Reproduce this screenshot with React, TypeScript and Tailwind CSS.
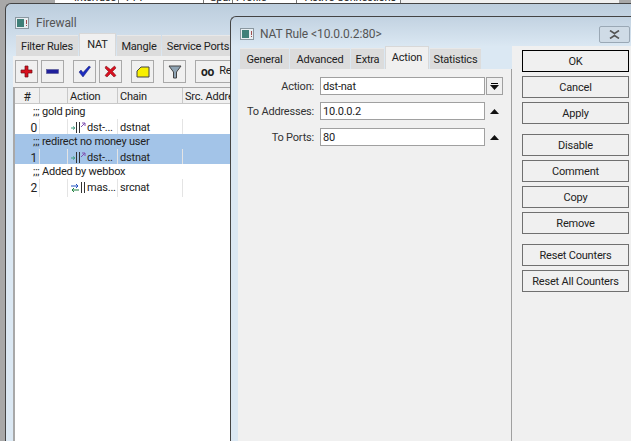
import React from "react";

const topTabs = [
  { label: "Interface", cls: "w-[47px] pl-[2px]" },
  { label: "PPP", cls: "w-[85px] pl-[7px]" },
  { label: "Spanning", cls: "w-[29px] pl-[6px]" },
  { label: "Profile", cls: "w-[64px] pl-[3px]" },
  { label: "Active Connections", cls: "w-[104px] pl-[8px]" },
];

function AppIcon() {
  return (
    <svg width="14" height="12" viewBox="0 0 14 12" className="shrink-0">
      <rect x="0.5" y="0.5" width="13" height="11" fill="#e8eef2" stroke="#8a97a0" />
      <rect x="2" y="2" width="7" height="8" fill="#3f7f78" />
      <rect x="11" y="3" width="1" height="4" fill="#a05050" />
      <rect x="11" y="8" width="1" height="1" fill="#a05050" />
    </svg>
  );
}

function Tab({ label, active, cls }: { label: string; active?: boolean; cls: string }) {
  return (
    <div
      className={
        active
          ? `${cls} h-[23px] flex items-center justify-center bg-[#f0f0f0] border border-b-0 border-[#d8d8d8]`
          : `${cls} h-[21px] flex items-center justify-center bg-[#dcdcdc] border-t border-[#e8e8e8] pt-[3px]`
      }
    >
      {label}
    </div>
  );
}

function ToolButton({ cls, children }: { cls: string; children: React.ReactNode }) {
  return (
    <div className={`${cls} h-[23px] flex items-center justify-center border border-[#a9a9a9] bg-[#f0f0f0]`}>
      {children}
    </div>
  );
}

function ActionIcon({ kind }: { kind: "dst" | "mas" }) {
  if (kind === "mas") {
    return (
      <svg width="15" height="12" viewBox="0 0 15 12" className="shrink-0">
        <path d="M0 4h7M5 2l2 2-2 2" fill="none" stroke="#2050c0" strokeWidth="1" />
        <path d="M8 8H1M3 6 1 8l2 2" fill="none" stroke="#208040" strokeWidth="1" />
        <rect x="10" y="0" width="1" height="11" fill="#333" />
        <rect x="13" y="0" width="1" height="11" fill="#333" />
      </svg>
    );
  }
  return (
    <svg width="15" height="12" viewBox="0 0 15 12" className="shrink-0">
      <path d="M0 6h3M2 4.500 4 6 2 7.500" fill="none" stroke="#40a080" strokeWidth="1" />
      <rect x="5" y="0" width="1" height="11" fill="#333" />
      <rect x="8" y="0" width="1" height="11" fill="#333" />
      <path d="M10 5l4-4M11 1h3v3" fill="none" stroke="#8050b0" strokeWidth="1" />
    </svg>
  );
}

function CommentRow({ text, selected }: { text: string; selected?: boolean }) {
  return (
    <div className={`h-[15px] flex items-center pl-[18px] pt-[2px] ${selected ? "bg-[#a3c4e8]" : "bg-white"}`}>
      ;;; {text}
    </div>
  );
}

function RuleRow({ n, kind, action, chain, selected }: { n: string; kind: "dst" | "mas"; action: string; chain: string; selected?: boolean }) {
  return (
    <div className={`h-[15px] grid grid-cols-[25px_28px_50px_65px_1fr] items-center ${selected ? "bg-[#a3c4e8]" : "bg-white"}`}>
      <div className="h-full flex items-center justify-end pr-[2px] border-r border-[#e4e4e4] text-[12px]">{n}</div>
      <div className="h-full border-r border-[#e4e4e4]" />
      <div className="h-full flex items-center gap-[1px] pl-[3px] border-r border-[#e4e4e4] whitespace-nowrap overflow-hidden">
        <ActionIcon kind={kind} />
        {action}
      </div>
      <div className="h-full flex items-center pl-[2px] border-r border-[#e4e4e4]">{chain}</div>
      <div className="h-full" />
    </div>
  );
}

function FirewallWindow() {
  return (
    <div className="absolute left-[5px] top-[3px] right-0 bottom-0 flex flex-col rounded-tl-[6px] border-l border-t border-[#444] bg-gradient-to-b from-[#bccddd] from-0% to-[#dbe8f3] to-[12%] pl-[7px]">
      <div className="h-[29px] flex items-center gap-[7px] pl-[2px] pt-[8px] text-[12px] tracking-[-0.1px] text-[#555]">
        <AppIcon />
        Firewall
      </div>
      <div className="flex items-end gap-[1px] pl-[3px] h-[23px]">
        <Tab label="Filter Rules" cls="w-[62px]" />
        <Tab label="NAT" active cls="w-[37px]" />
        <Tab label="Mangle" cls="w-[44px]" />
        <Tab label="Service Ports" cls="w-[72px]" />
      </div>
      <div className="flex-1 flex flex-col bg-[#f0f0f0]">
        <div className="h-[31px] flex items-center pl-[2px]">
          <ToolButton cls="w-[23px] mr-[3px]">
            <svg width="13" height="13" viewBox="0 0 13 13"><path d="M5 1h3v4h4v3H8v4H5V8H1V5h4z" fill="#d80f1c" stroke="#6a1015" strokeWidth="0.7" /></svg>
          </ToolButton>
          <ToolButton cls="w-[23px] mr-[9px]">
            <svg width="13" height="13" viewBox="0 0 13 13"><rect x="0.5" y="4.5" width="12" height="4" fill="#20209c" stroke="#555590" strokeWidth="0.6" /></svg>
          </ToolButton>
          <ToolButton cls="w-[23px] mr-[3px]">
            <svg width="13" height="13" viewBox="0 0 13 13"><path d="M1 7l2-2 2 2.500L11 1l1.500 1L5 12z" fill="#1c2cc0" stroke="#1a2070" strokeWidth="0.5" /></svg>
          </ToolButton>
          <ToolButton cls="w-[23px] mr-[9px]">
            <svg width="13" height="13" viewBox="0 0 13 13"><path d="M2 1l4.500 3.500L10.500 1 12 3 8.500 6.500 12 10.500 10 12 6.500 8.500 3 12 1 10.500 4.500 6.500 1 3z" fill="#d81020" stroke="#701015" strokeWidth="0.5" /></svg>
          </ToolButton>
          <ToolButton cls="w-[23px] mr-[9px]">
            <svg width="14" height="12" viewBox="0 0 14 12"><path d="M1 5l4-4h8v10H1z" fill="#f8f000" stroke="#444" /></svg>
          </ToolButton>
          <ToolButton cls="w-[23px] mr-[9px]">
            <svg width="14" height="14" viewBox="0 0 14 14"><path d="M1 1h12L8.500 7v6h-3V7z" fill="#8fa4b4" stroke="#444" /></svg>
          </ToolButton>
          <ToolButton cls="w-[50px] justify-start pl-[5px] overflow-hidden whitespace-nowrap">
            <span className="font-bold mr-[5px] text-[12px]">oo</span>Reset
          </ToolButton>
        </div>
        <div className="flex-1 flex flex-col border-l-2 border-t border-[#a8a8a8] bg-white">
          <div className="h-[15px] grid grid-cols-[25px_28px_50px_65px_1fr] bg-[#f0f0f0] border-b border-[#c8c8c8] box-content">
            <div className="flex items-center justify-center border-r border-[#c8c8c8] text-[12px]">#</div>
            <div className="border-r border-[#c8c8c8]" />
            <div className="flex items-center pl-[2px] border-r border-[#c8c8c8]">Action</div>
            <div className="flex items-center pl-[2px] border-r border-[#c8c8c8]">Chain</div>
            <div className="flex items-center pl-[2px]">Src. Address</div>
          </div>
          <CommentRow text="gold ping" />
          <RuleRow n="0" kind="dst" action="dst-..." chain="dstnat" />
          <CommentRow text="redirect no money user" selected />
          <RuleRow n="1" kind="dst" action="dst-..." chain="dstnat" selected />
          <CommentRow text="Added by webbox" />
          <RuleRow n="2" kind="mas" action="mas..." chain="srcnat" />
        </div>
      </div>
    </div>
  );
}

function Field({ label, value, after, cls }: { label: string; value: string; after: React.ReactNode; cls?: string }) {
  return (
    <div className={`flex items-center h-[18px] ${cls ?? ""}`}>
      <div className="w-[82px] text-right pr-[6px] pt-[2px] text-[#333] whitespace-nowrap">{label}:</div>
      <div className="w-[165px] h-[18px] flex items-center pl-[2px] pt-[2px] bg-white border border-[#a0a0a0]">{value}</div>
      <div className="w-[19px] flex items-center justify-center">{after}</div>
    </div>
  );
}

function Arrow() {
  return (
    <svg width="9" height="5" viewBox="0 0 9 5"><path d="M4.500 0L9 5H0z" fill="#111" /></svg>
  );
}

function SideButton({ label, primary }: { label: string; primary?: boolean }) {
  return (
    <div className={`h-[22px] flex items-center justify-center pt-[2px] bg-[#f0f0f0] border ${primary ? "border-black" : "border-[#707070]"}`}>
      {label}
    </div>
  );
}

function NatWindow() {
  return (
    <div className="absolute left-[230px] top-[16px] right-0 bottom-0 flex flex-col rounded-tl-[6px] border-l border-t border-[#444] bg-gradient-to-b from-[#c2d2e1] from-0% to-[#dbe8f3] to-[7%] pl-[7px]">
      <div className="relative h-[29px] flex items-center gap-[6px] pl-[2px] pt-[5px] text-[12px] tracking-[-0.1px] text-[#555]">
        <AppIcon />
        {"NAT Rule <10.0.0.2:80>"}
        <div className="absolute right-[1px] top-[9px] w-[31px] h-[17px] flex items-center justify-center rounded-[2px] border border-[#9aa8b5] bg-[#cfdbe6]">
          <svg width="11" height="9" viewBox="0 0 11 9"><path d="M1 0.500l4.500 3L10 0.500M1 8.500l4.500-3 4.500 3" fill="none" stroke="#555" strokeWidth="1.600" /></svg>
        </div>
      </div>
      <div className="flex-1 flex bg-[#f0f0f0]">
        <div className="w-[274px] flex flex-col shrink-0 bg-[#dbe8f3]">
          <div className="flex items-end gap-[1px] pl-[2px] h-[23px] shrink-0">
            <Tab label="General" cls="w-[49px]" />
            <Tab label="Advanced" cls="w-[60px]" />
            <Tab label="Extra" cls="w-[33px]" />
            <Tab label="Action" active cls="w-[44px]" />
            <Tab label="Statistics" cls="w-[51px]" />
          </div>
          <div className="flex-1 bg-[#f0f0f0] border-r border-[#a0a0a0] flex flex-col gap-[7px] pt-[8px]">
            <Field
              label="Action"
              value="dst-nat"
              after={
                <div className="w-[17px] h-[18px] flex flex-col items-center justify-center border border-[#a0a0a0]">
                  <div className="w-[7px] h-[1px] bg-black mb-[1px]" />
                  <svg width="9" height="5" viewBox="0 0 9 5"><path d="M4.500 5L9 0H0z" fill="#111" /></svg>
                </div>
              }
            />
            <Field label="To Addresses" value="10.0.0.2" after={<Arrow />} />
            <Field label="To Ports" value="80" after={<Arrow />} cls="mt-[1px]" />
          </div>
        </div>
        <div className="flex-1 bg-[#f0f0f0] flex flex-col pl-[10px] pr-[2px] pt-[4px] text-[#222]">
          <div className="flex flex-col gap-[4px]">
            <SideButton label="OK" primary />
            <SideButton label="Cancel" />
            <SideButton label="Apply" />
          </div>
          <div className="flex flex-col gap-[4px] mt-[10px]">
            <SideButton label="Disable" />
            <SideButton label="Comment" />
            <SideButton label="Copy" />
            <SideButton label="Remove" />
          </div>
          <div className="flex flex-col gap-[4px] mt-[10px]">
            <SideButton label="Reset Counters" />
            <SideButton label="Reset All Counters" />
          </div>
        </div>
      </div>
    </div>
  );
}

export default function App() {
  return (
    <div className="relative w-[631px] h-[441px] overflow-hidden bg-[#a8a8a8] text-[#222] text-[11px] tracking-[-0.2px] font-['Roboto',sans-serif]">
      <div className="ml-[55px] mr-[12px] h-[4px] flex overflow-hidden bg-[#f0f0f0]">
        <div className="w-[17px] bg-white shrink-0" />
        {topTabs.map((t) => (
          <div key={t.label} className={`${t.cls} shrink-0 -mt-[9px] h-[14px] whitespace-nowrap overflow-hidden border-r border-[#777] leading-[14px] bg-white`}>
            {t.label}
          </div>
        ))}
      </div>
      <FirewallWindow />
      <NatWindow />
    </div>
  );
}
